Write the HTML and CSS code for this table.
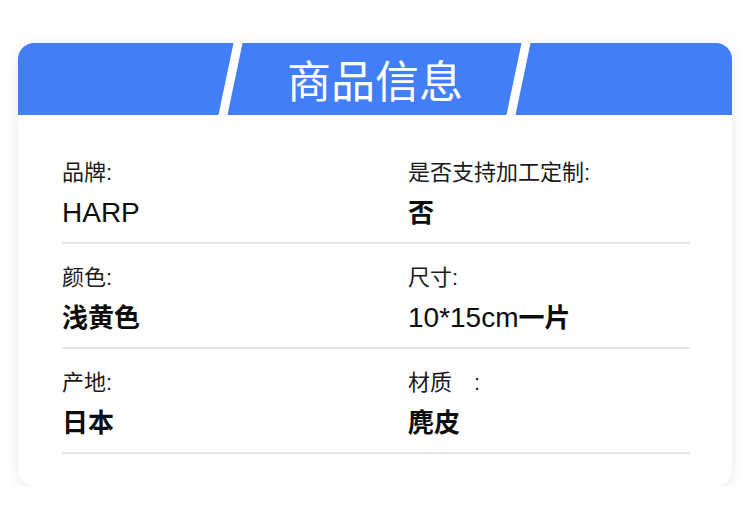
FILE: index.html
```html
<!DOCTYPE html>
<html lang="zh-CN">
<head>
<meta charset="utf-8">
<title>商品信息</title>
<link rel="stylesheet" href="styles.css">
</head>
<body>
  <section class="card">
    <header class="card-head">
      <span class="stripe stripe-left"></span>
      <h1 class="card-title">商品信息</h1>
      <span class="stripe stripe-right"></span>
    </header>
    <div class="card-body">
      <div class="row">
        <div class="cell">
          <div class="label">品牌:</div>
          <div class="value"><span class="latin">HARP</span></div>
        </div>
        <div class="cell">
          <div class="label">是否支持加工定制:</div>
          <div class="value">否</div>
        </div>
      </div>
      <div class="row">
        <div class="cell">
          <div class="label">颜色:</div>
          <div class="value">浅黄色</div>
        </div>
        <div class="cell">
          <div class="label">尺寸:</div>
          <div class="value"><span class="latin">10*15cm</span>一片</div>
        </div>
      </div>
      <div class="row">
        <div class="cell">
          <div class="label">产地:</div>
          <div class="value">日本</div>
        </div>
        <div class="cell">
          <div class="label">材质　:</div>
          <div class="value">麂皮</div>
        </div>
      </div>
    </div>
  </section>
</body>
</html>
```
FILE: styles.css
```css
* { box-sizing: border-box; }

html, body {
  margin: 0;
  background: #ffffff;
}

body {
  padding: 43px 18px 0;
  font-family: "Liberation Sans", "Noto Sans CJK SC", sans-serif;
  color: #111111;
}

.card {
  width: 714px;
  background: #ffffff;
  border-radius: 16px;
  box-shadow: 0 3px 14px rgba(0, 0, 0, 0.09);
  overflow: hidden;
}

.card-head {
  position: relative;
  height: 72px;
  background: #427ef7;
  display: flex;
  align-items: center;
  justify-content: center;
}

.card-title {
  margin: 0;
  font-family: "Noto Sans CJK SC", sans-serif;
  font-weight: 400;
  font-size: 44px;
  line-height: 1;
  color: #ffffff;
}

.stripe {
  position: absolute;
  top: 0;
  bottom: 0;
  width: 9px;
  background: #ffffff;
  transform: skewX(-11.8deg);
}

.stripe-left { left: 208px; }
.stripe-right { left: 496px; }

.card-body {
  padding: 24px 42px 32px 44px;
}

.row {
  display: grid;
  grid-template-columns: 346px 1fr;
  padding: 19px 0 11px;
  border-bottom: 2px solid #e6e6e6;
}

.cell {
  display: flex;
  flex-direction: column;
  gap: 7px;
}

.label {
  font-size: 22px;
  line-height: 30px;
  color: #1a1a1a;
}

.value {
  font-family: "Liberation Sans", "Noto Sans CJK SC", sans-serif;
  font-size: 26px;
  line-height: 36px;
  font-weight: 700;
  color: #0d0d0d;
}

.value .latin {
  font-size: 28px;
  font-weight: 400;
}
```
